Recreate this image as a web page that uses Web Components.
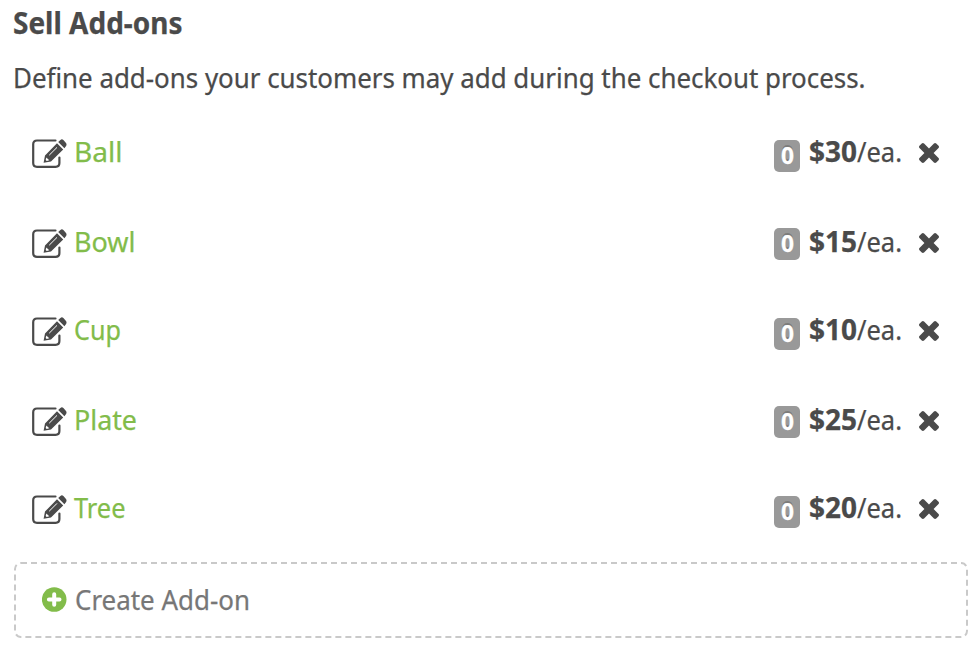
<!DOCTYPE html>
<html lang="en"><head><meta charset="utf-8"><title>Sell Add-ons</title>
<style>
body{margin:0;background:#fff;color:#4a4a4a;font:28px/34px "Noto Sans","Open Sans",sans-serif;-webkit-text-stroke:.25px currentColor}
</style></head><body>
<addons-panel></addons-panel>
<script>
const make=(name,html,setup)=>customElements.define(name,class extends HTMLElement{
  connectedCallback(){
    if(this.shadowRoot)return;
    const t=document.createElement('template');t.innerHTML=html;
    this.attachShadow({mode:'open'}).append(t.content.cloneNode(true));
    if(setup)setup(this,this.shadowRoot);
  }
});

make('fit-text','<style>:host{display:inline-block;white-space:pre;flex:none}span{display:inline-block;transform-origin:0 50%}</style><span><slot></slot></span>',(el,r)=>{
  const s=r.querySelector('span'),w=+el.getAttribute('w');
  el.style.width=w+'px';
  s.style.transform='scaleX('+w/s.getBoundingClientRect().width+')';
});
make('edit-icon',`<style>:host{display:block;width:36px;height:30px}svg{display:block}</style>
<svg width="36" height="30" viewBox="0 0 36 30"><path d="M23.5 1.5H5Q1.2 1.5 1.2 5.3V24Q1.2 27.8 5 27.8H23.6Q27.4 27.8 27.4 24V18.6" fill="none" stroke="#4a4a4a" stroke-width="2.2" stroke-linecap="round"/><path d="M11.6 23.8L13 16.6 25 4.2 31.2 10.4 19 22.4ZM26.2 3L28.4.9Q30-.3 31.4 1L34 4Q35 5.4 34.1 6.9L32.4 9.2Z" fill="#4a4a4a"/><path d="M17.2 16.2L25 8.4" stroke="#fff" stroke-width="1"/><path d="M14.3 18.4L17.3 21.3 14.7 21.9 13.7 21Z" fill="#fff"/></svg>`);
make('remove-icon',`<style>:host{display:block;width:20px;height:20px}svg{display:block}</style>
<svg width="20" height="20" viewBox="110 366 1188 1188" preserveAspectRatio="none"><path fill="#4a4a4a" d="M1298 1322q0 40-28 68l-136 136q-28 28-68 28t-68-28l-294-294-294 294q-28 28-68 28t-68-28l-136-136q-28-28-28-68t28-68l294-294-294-294q-28-28-28-68t28-68l136-136q28-28 68-28t68 28l294 294 294-294q28-28 68-28t68 28l136 136q28 28 28 68t-28 68l-294 294 294 294q28 28 28 68z"/></svg>`);
make('count-badge',`<style>:host{display:block;box-sizing:border-box;width:26px;height:32px;border-radius:5px;background:#999;color:#fff;text-align:center;font:bold 23px/31px "Noto Sans",sans-serif;text-shadow:0 -2px 0 rgba(0,0,0,.2)}</style><fit-text w="13"><slot></slot></fit-text>`);
make('addon-row',`<style>
:host{display:grid;grid-template-columns:42.5px 1fr 26px 9px 109.5px 20px;align-items:start;padding:0 41.5px 0 31.5px;box-sizing:border-box}
:host>*{min-width:0}edit-icon{margin-top:5px}.name{color:#82bc4a}.price{grid-column:5;display:flex}
count-badge{margin-top:var(--badge-top,6px)}remove-icon{margin-top:9px}
</style><edit-icon></edit-icon><div class="name"><slot></slot></div><count-badge>0</count-badge><div class="price"></div><remove-icon></remove-icon>`,(el,r)=>{
  r.querySelector('.price').innerHTML='<fit-text w="48" style="font-weight:700">'+el.getAttribute('price')+'</fit-text><fit-text w="45">/ea.</fit-text>';
});
make('create-addon',`<style>
:host{display:block;box-sizing:border-box;width:954px;height:76px;margin-left:14px;color:#777}
.box{display:flex;padding:20px 0 0 28px;height:76px;box-sizing:border-box;position:relative}
.frame{position:absolute;inset:0}.plus{flex:none;margin:5px 7.5px 0 0}
</style><div class="box"><svg class="frame" width="954" height="76"><rect x="1" y="1" width="952" height="74" rx="6" fill="none" stroke="#c9c9c9" stroke-width="2" stroke-dasharray="6 4"/></svg>
<svg class="plus" width="25" height="25" viewBox="0 0 25 25"><circle cx="12.2" cy="12.5" r="12.3" fill="#82bc4a"/><path d="M12.2 7.2V17.8M6.9 12.5H17.5" stroke="#fff" stroke-width="4" stroke-linecap="round"/></svg><slot></slot></div>`);
make('addons-panel',`<style>
:host{display:block;width:980px;height:646px;overflow:hidden}
h2{margin:0;padding:5px 0 0 13px;font-size:30px;line-height:36px;height:55px;box-sizing:border-box}
p{margin:0;padding:5px 0 0 12.5px;height:79px;box-sizing:border-box}
.list{display:grid;grid-template-rows:90px 88px 90px 88px 72px}
.list>:nth-child(even){--badge-top:4px}
</style>
<h2><fit-text w="169.5">Sell Add-ons</fit-text></h2>
<p><fit-text w="852.5">Define add-ons your customers may add during the checkout process.</fit-text></p>
<div class="list">
<addon-row price="$30"><fit-text w="48.5">Ball</fit-text></addon-row>
<addon-row price="$15"><fit-text w="61.5">Bowl</fit-text></addon-row>
<addon-row price="$10"><fit-text w="47">Cup</fit-text></addon-row>
<addon-row price="$25"><fit-text w="63">Plate</fit-text></addon-row>
<addon-row price="$20"><fit-text w="51.5">Tree</fit-text></addon-row></div>
<create-addon><fit-text w="175">Create Add-on</fit-text></create-addon>`);
</script></body></html>
